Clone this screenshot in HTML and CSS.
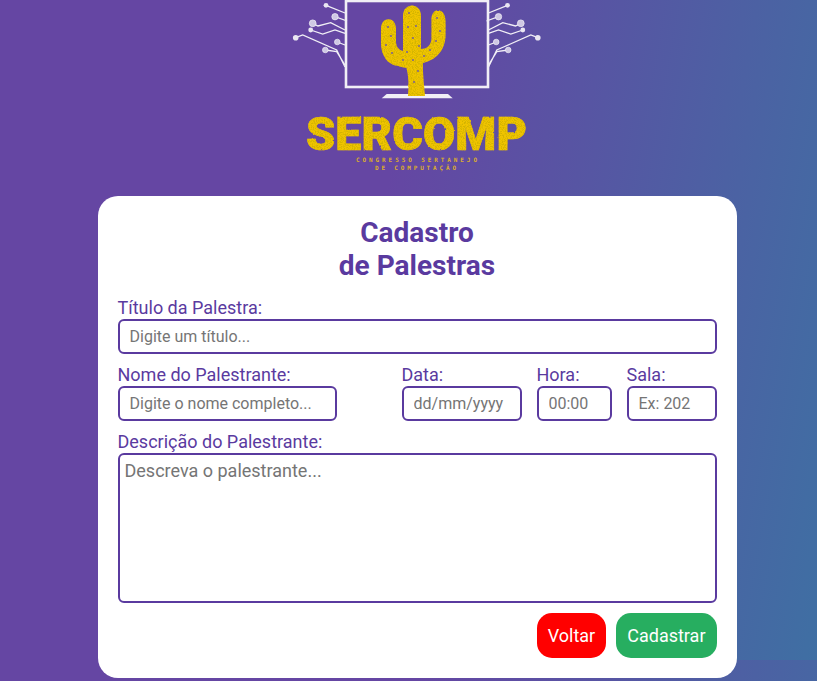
FILE: index.html
```html
<!DOCTYPE html>
<html lang="pt-BR">
<head>
<meta charset="utf-8">
<title>Cadastro de Palestras</title>
<link rel="stylesheet" href="styles.css">
</head>
<body>
<main class="page">
  <header class="logo-wrap">
    <svg class="logo" viewBox="280 0 275 196" width="275" height="196" aria-label="SERCOMP">
      <defs>
        <filter id="gold" x="-5%" y="-5%" width="110%" height="110%">
          <feTurbulence type="fractalNoise" baseFrequency="0.25" numOctaves="2" seed="7" result="w"/>
          <feDisplacementMap in="SourceGraphic" in2="w" scale="1.8" xChannelSelector="R" yChannelSelector="G" result="rough"/>
          <feTurbulence type="fractalNoise" baseFrequency="0.9" numOctaves="2" seed="4" result="n"/>
          <feColorMatrix in="n" type="matrix" values="0 0 0 0 0.66  0 0 0 0 0.46  0 0 0 0 0  0 0 0 4 -1.7" result="s"/>
          <feComposite in="s" in2="rough" operator="in" result="sp"/>
          <feMerge><feMergeNode in="rough"/><feMergeNode in="sp"/></feMerge>
          <feGaussianBlur stdDeviation="0.3"/>
        </filter>
        <filter id="chalk" x="-5%" y="-5%" width="110%" height="110%">
          <feTurbulence type="fractalNoise" baseFrequency="0.5" numOctaves="2" seed="3" result="w"/>
          <feDisplacementMap in="SourceGraphic" in2="w" scale="1" xChannelSelector="R" yChannelSelector="G"/>
          <feGaussianBlur stdDeviation="0.4"/>
        </filter>
        <g id="circuit" class="wires">
          <path d="M326 5.3L345 13M335 16.7L347 21M312.7 23.3L318 26L330.7 22.7L345 30M310.7 30L322.7 34L335 30L345 33.3M295.7 37.7L302.7 35L336.7 50L345 67M337.3 42L345 45M325.3 50L336.7 51.7L345 65"/>
          <circle class="node" cx="326" cy="5.3" r="2.4"/>
          <circle class="node ring" cx="335" cy="16.7" r="3.2"/>
          <circle class="node ring" cx="312.7" cy="23.3" r="3.4"/>
          <circle class="node" cx="310.7" cy="30" r="2.4"/>
          <circle class="node" cx="295.7" cy="37.7" r="2.8"/>
          <circle class="node ring" cx="337.3" cy="42" r="2.8"/>
          <circle class="node ring" cx="325.3" cy="50" r="2.8"/>
        </g>
      </defs>
      <g filter="url(#chalk)">
        <use href="#circuit"/>
        <use href="#circuit" transform="translate(833.5 0) scale(-1 1)"/>
        <rect class="screen" x="346" y="1" width="142" height="86"/>
        <path class="base" d="M381.7 98.3L386.7 94H448L452.7 98.3Z"/>
      </g>
      <g filter="url(#gold)">
        <path class="cactus" d="M408 96C409 85 408.500 76 406.500 68C397 66 388 65 384 56C381 50 381 45 381 40V29C381 16 396 16 396 29V42C396 47 399 50 403 51V16C403 2 421 2 421 16V49C426 49 431.500 46 431.500 38V19C431.500 7 445.500 7 445.500 21V35C445.500 50 436 60 423 63C422.500 72 424 85 425 96Z"/>
      </g>
      <g class="dots">
        <circle cx="388" cy="27" r=".9"/><circle cx="391" cy="36" r=".9"/><circle cx="386" cy="45" r=".9"/><circle cx="392" cy="53" r=".9"/>
        <circle cx="409" cy="13" r=".9"/><circle cx="416" cy="26" r=".9"/><circle cx="408" cy="27" r=".9"/><circle cx="413" cy="38" r=".9"/><circle cx="419" cy="46" r=".9"/><circle cx="407" cy="52" r=".9"/>
        <circle cx="413" cy="60" r=".9"/><circle cx="418" cy="71" r=".9"/><circle cx="414" cy="82" r=".9"/><circle cx="403" cy="60" r=".9"/>
        <circle cx="437" cy="18" r=".9"/><circle cx="440" cy="31" r=".9"/><circle cx="436" cy="41" r=".9"/><circle cx="430" cy="50" r=".9"/><circle cx="424" cy="56" r=".9"/>
      </g>
      <g filter="url(#gold)">
        <text class="brand" x="306" y="150" textLength="221" lengthAdjust="spacingAndGlyphs">SERCOMP</text>
      </g>
      <text class="tag" x="356" y="162" textLength="121">CONGRESSO SERTANEJO</text>
      <text class="tag" x="375" y="170" textLength="81">DE COMPUTAÇÃO</text>
    </svg>
  </header>

  <form class="card">
    <h1 class="title">Cadastro<br>de Palestras</h1>

    <div class="field">
      <label class="label" for="titulo">Título da Palestra:</label>
      <input class="input" id="titulo" type="text" placeholder="Digite um título...">
    </div>

    <div class="row">
      <div class="field w-nome">
        <label class="label" for="nome">Nome do Palestrante:</label>
        <input class="input" id="nome" type="text" placeholder="Digite o nome completo...">
      </div>
      <div class="group">
        <div class="field w-data">
          <label class="label" for="data">Data:</label>
          <input class="input" id="data" type="text" placeholder="dd/mm/yyyy">
        </div>
        <div class="field w-hora">
          <label class="label" for="hora">Hora:</label>
          <input class="input" id="hora" type="text" placeholder="00:00">
        </div>
        <div class="field w-sala">
          <label class="label" for="sala">Sala:</label>
          <input class="input" id="sala" type="text" placeholder="Ex: 202">
        </div>
      </div>
    </div>

    <div class="field">
      <label class="label" for="descricao">Descrição do Palestrante:</label>
      <textarea class="textarea" id="descricao" placeholder="Descreva o palestrante..."></textarea>
    </div>

    <div class="actions">
      <button class="btn btn-back" type="button">Voltar</button>
      <button class="btn btn-save" type="submit">Cadastrar</button>
    </div>
  </form>
</main>
</body>
</html>
```

FILE: styles.css
```css
* {
  box-sizing: border-box;
}

html {
  height: 100%;
}

body {
  margin: 0;
  min-height: 681px;
  font-family: Roboto, "Liberation Sans", sans-serif;
  background-color: #6546a3;
  background-image: linear-gradient(100deg, #6546a3 0%, #6546a3 45%, #3f6fa3 100%);
  background-size: 100% 660px;
  background-repeat: repeat-y;
  overflow: hidden;
}

.page {
  width: 639px;
  margin-left: 97.5px;
}

.logo-wrap {
  height: 196px;
  display: flex;
  justify-content: center;
}

.logo {
  display: block;
}

.wires path {
  fill: none;
  stroke: #f1eff6;
  stroke-width: 1.3;
}

.node {
  fill: #e9e6f2;
}

.ring {
  stroke: #f1eff6;
  stroke-width: .7;
  fill: #cfc8e4;
}

.screen {
  fill: none;
  stroke: #f1eff6;
  stroke-width: 2.6;
}

.base {
  fill: #f1eff6;
}

.cactus {
  fill: #f0c400;
}

.dots {
  fill: #6a55a8;
}

.brand {
  font-family: Roboto, "Liberation Sans", sans-serif;
  font-weight: 900;
  font-size: 47px;
  fill: #f0c400;
  stroke: #f0c400;
  stroke-width: .6;
}

.tag {
  font-family: "DejaVu Sans Mono", monospace;
  font-weight: 700;
  font-size: 6px;
  fill: #dcae2a;
}

.card {
  background: #fff;
  border-radius: 20px;
  padding: 20px;
  display: flex;
  flex-direction: column;
  gap: 10px;
}

.title {
  margin: 0 0 5px;
  font-size: 28px;
  line-height: 33px;
  font-weight: 700;
  text-align: center;
  color: #5a3a9f;
}

.field {
  display: flex;
  flex-direction: column;
}

.label {
  font-size: 18px;
  line-height: 22px;
  color: #5a3a9f;
}

.input,
.textarea {
  display: block;
  width: 100%;
  border: 2px solid #5a3a9f;
  border-radius: 6px;
  font-family: inherit;
  background: #fff;
  outline: none;
}

.input {
  height: 35px;
  padding: 0 10px;
  font-size: 16px;
}

.textarea {
  height: 150px;
  padding: 5px;
  font-size: 18px;
  resize: none;
}

.row {
  display: flex;
  justify-content: space-between;
}

.group {
  display: flex;
  gap: 15px;
}

.w-nome {
  width: 219px;
}

.w-data {
  width: 120px;
}

.w-hora {
  width: 75px;
}

.w-sala {
  width: 90px;
}

.actions {
  display: flex;
  justify-content: flex-end;
  gap: 10px;
}

.btn {
  height: 45px;
  padding: 0 11px;
  border: 0;
  border-radius: 15px;
  color: #fff;
  font-family: inherit;
  font-size: 18px;
}

.btn-back {
  background: #ff0000;
}

.btn-save {
  background: #27ae60;
}
```
